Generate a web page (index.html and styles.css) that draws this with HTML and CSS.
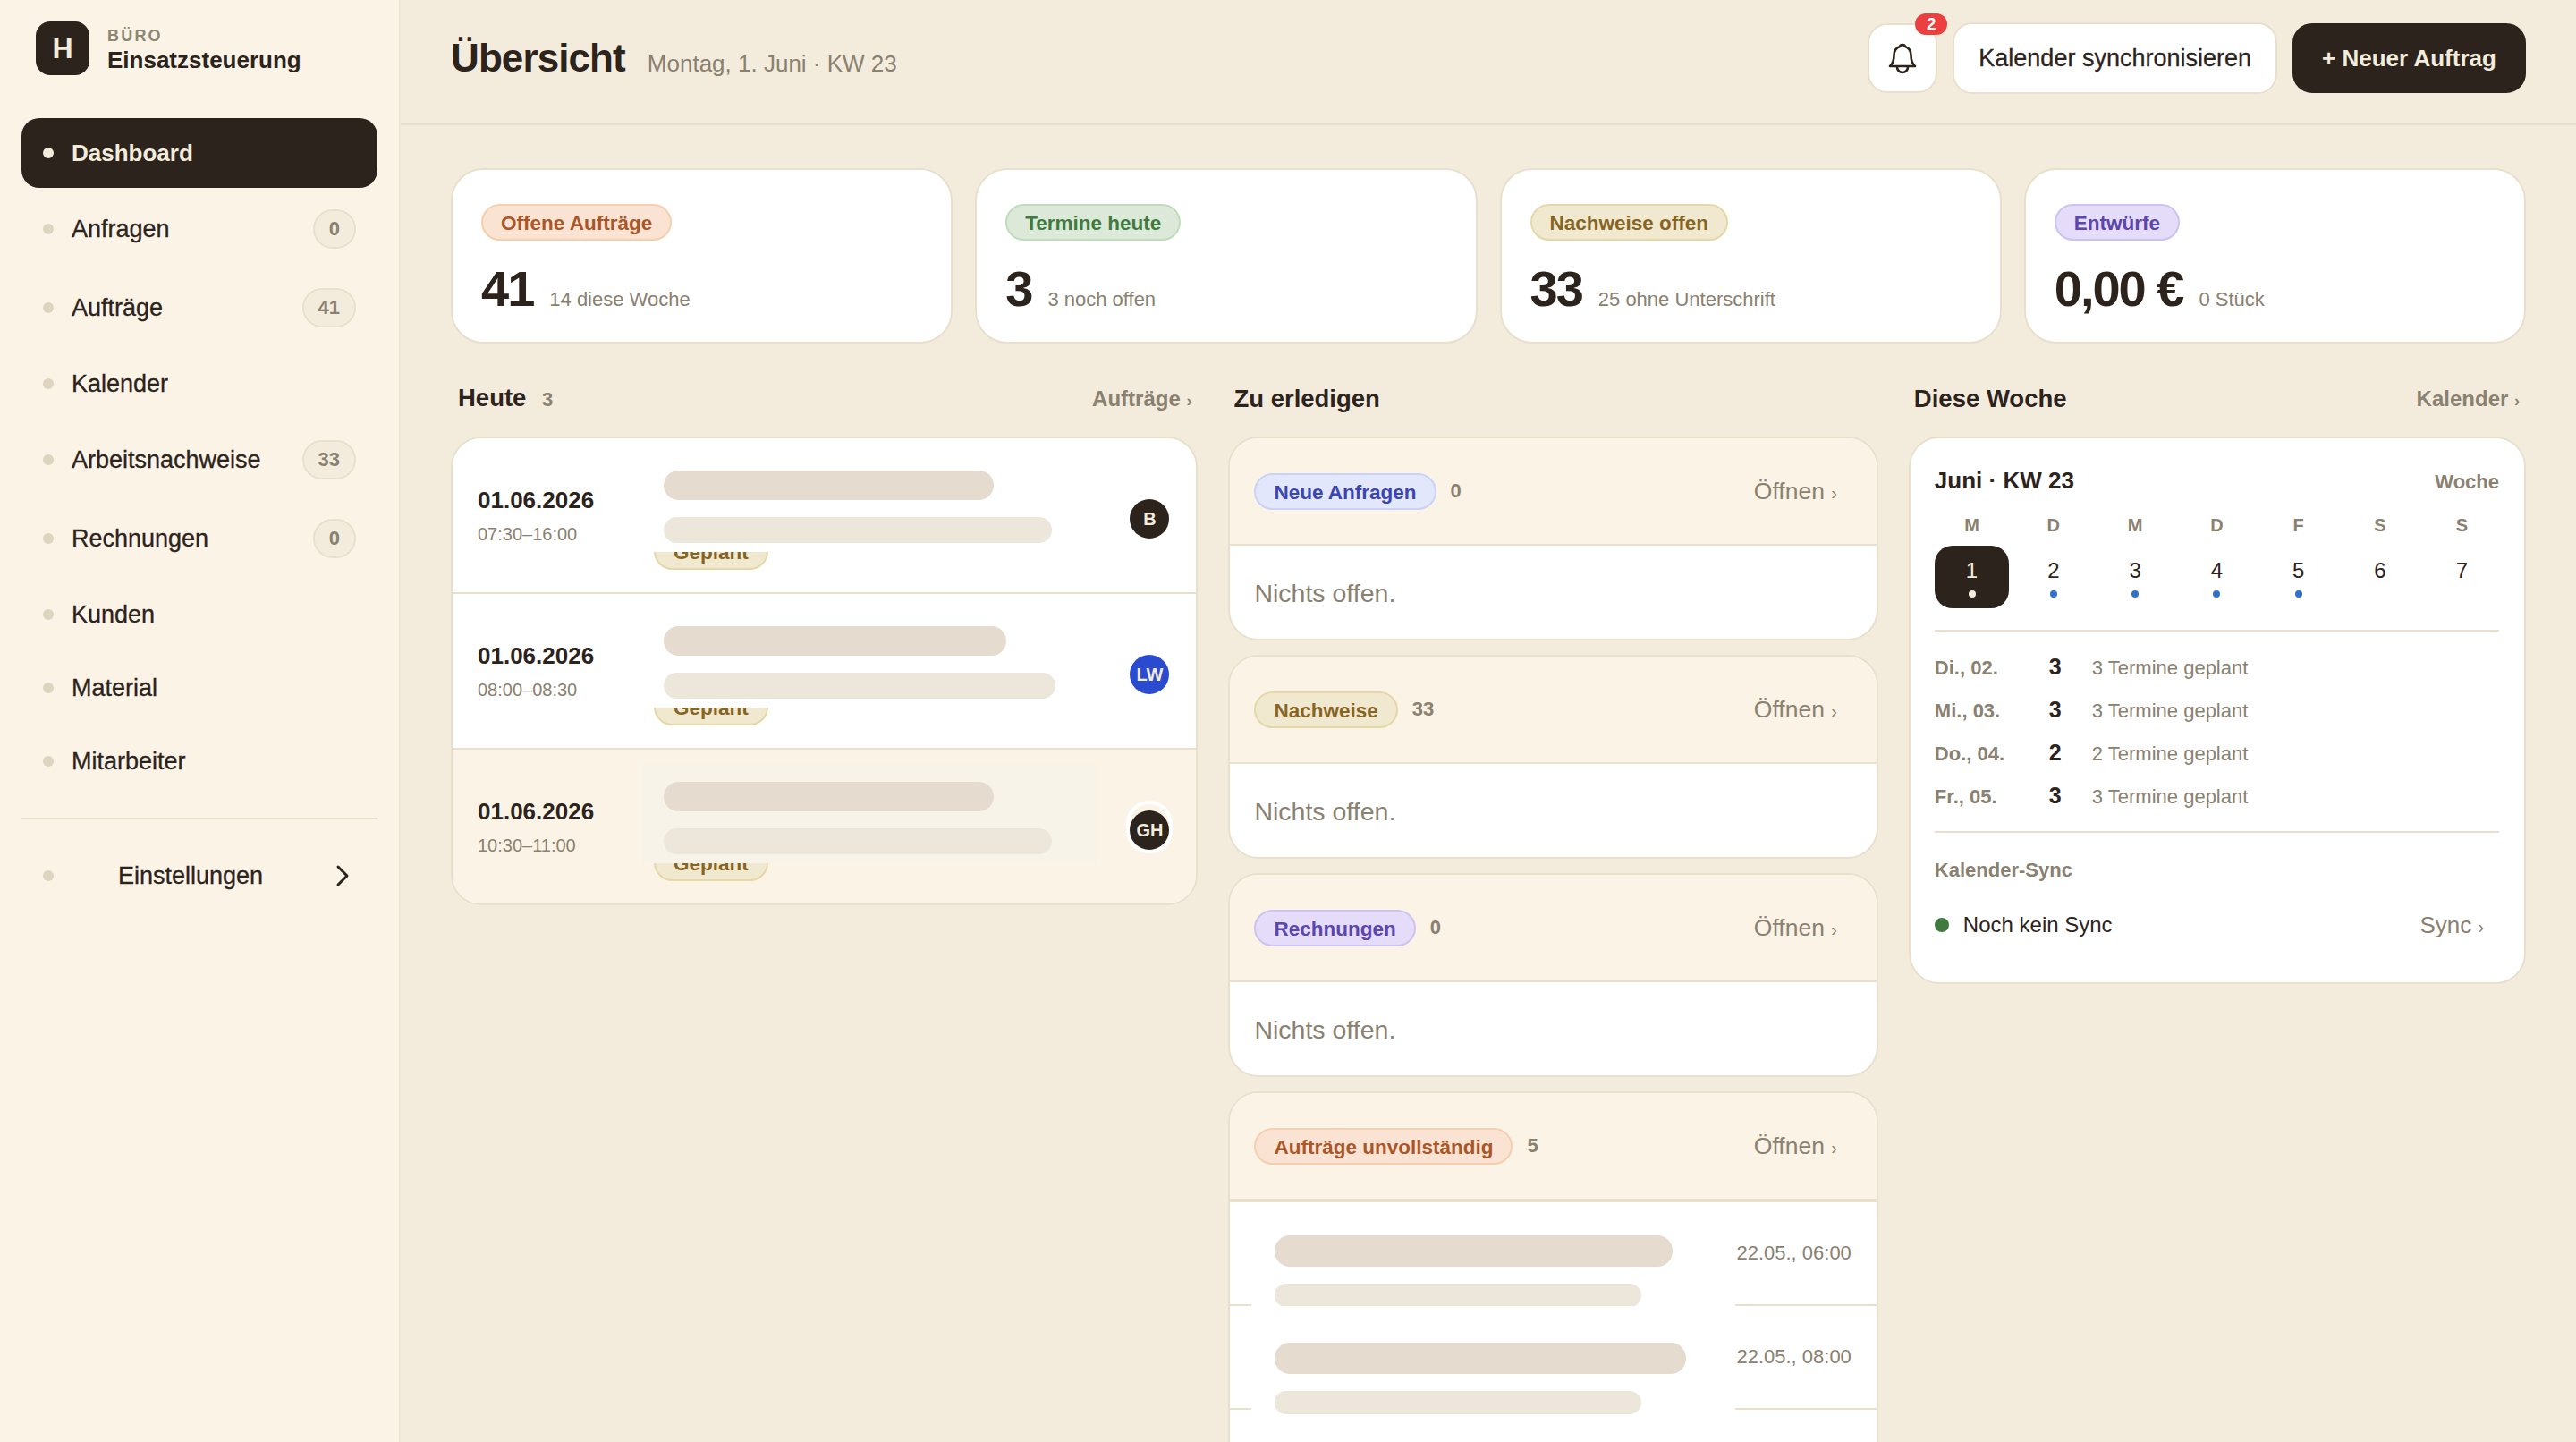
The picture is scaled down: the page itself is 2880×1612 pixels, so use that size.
FILE: index.html
```html
<!DOCTYPE html>
<html lang="de">
<head>
    <meta charset="UTF-8">
    <title>Einsatzsteuerung</title>
    <link rel="stylesheet" href="styles.css">
</head>
<body>
    <div class="app">
        <aside class="sidebar">
            <div class="brand">
                <div class="brand-logo">H</div>
                <div class="brand-text">
                    <div class="brand-kicker">BÜRO</div>
                    <div class="brand-name">Einsatzsteuerung</div>
                </div>
            </div>
            <nav class="nav">
                <a class="nav-item active"><span class="nav-dot"></span>Dashboard</a>
                <a class="nav-item"><span class="nav-dot"></span>Anfragen<span class="nav-badge">0</span></a>
                <a class="nav-item"><span class="nav-dot"></span>Aufträge<span class="nav-badge">41</span></a>
                <a class="nav-item"><span class="nav-dot"></span>Kalender</a>
                <a class="nav-item"><span class="nav-dot"></span>Arbeitsnachweise<span class="nav-badge">33</span></a>
                <a class="nav-item"><span class="nav-dot"></span>Rechnungen<span class="nav-badge">0</span></a>
                <a class="nav-item"><span class="nav-dot"></span>Kunden</a>
                <a class="nav-item"><span class="nav-dot"></span>Material</a>
                <a class="nav-item"><span class="nav-dot"></span>Mitarbeiter</a>
            </nav>
            <div class="nav-footer">
                <a class="nav-item"><span class="nav-dot"></span><span class="nav-center">Einstellungen</span>
                    <svg class="nav-chevron" viewBox="0 0 24 24" fill="none" stroke="currentColor" stroke-width="1.8" stroke-linecap="round" stroke-linejoin="round"><path d="m9 18 6-6-6-6"/></svg>
                </a>
            </div>
        </aside>

        <main class="main">
            <header class="topbar">
                <div class="page-title">
                    <h1>Übersicht</h1>
                    <span class="page-date">Montag, 1. Juni · KW 23</span>
                </div>
                <div class="top-actions">
                    <button class="btn btn-icon">
                        <svg viewBox="0 0 40 40" fill="none" stroke="currentColor" stroke-width="2.6" stroke-linecap="round" stroke-linejoin="round"><path d="M6 29c2-2 4.5-4 4.5-12 0-7 3.5-9 6.5-10 .5-2.5 5.500-2.500 6 0 3 1 6.500 3 6.500 10 0 8 2.500 10 4.500 12z"/><path d="M14 30a6 6 0 0 0 12 0"/></svg>
                        <span class="btn-count">2</span>
                    </button>
                    <button class="btn">Kalender synchronisieren</button>
                    <button class="btn btn-dark">+ Neuer Auftrag</button>
                </div>
            </header>

            <div class="content">
                <section class="kpis">
                    <div class="kpi">
                        <span class="pill pill-orange">Offene Aufträge</span>
                        <div class="kpi-line"><span class="kpi-value">41</span><span class="kpi-sub">14 diese Woche</span></div>
                    </div>
                    <div class="kpi">
                        <span class="pill pill-green">Termine heute</span>
                        <div class="kpi-line"><span class="kpi-value">3</span><span class="kpi-sub">3 noch offen</span></div>
                    </div>
                    <div class="kpi">
                        <span class="pill pill-yellow">Nachweise offen</span>
                        <div class="kpi-line"><span class="kpi-value">33</span><span class="kpi-sub">25 ohne Unterschrift</span></div>
                    </div>
                    <div class="kpi">
                        <span class="pill pill-purple">Entwürfe</span>
                        <div class="kpi-line"><span class="kpi-value">0,00 €</span><span class="kpi-sub">0 Stück</span></div>
                    </div>
                </section>

                <section class="columns">
                    <div class="col">
                        <div class="col-head">
                            <h2>Heute <span class="col-count">3</span></h2>
                            <a class="col-link">Aufträge <span class="chev">›</span></a>
                        </div>
                        <div class="card">
                            <div class="today-row">
                                <div class="today-date"><strong>01.06.2026</strong><span>07:30–16:00</span></div>
                                <div class="today-body">
                                    <span class="pill pill-yellow">Geplant</span>
                                    <div class="mask">
                                        <div class="bar bar-main" style="width: 369px"></div>
                                        <div class="bar bar-sub" style="width: 434px"></div>
                                    </div>
                                </div>
                                <div class="avatar">B</div>
                            </div>
                            <div class="today-row">
                                <div class="today-date"><strong>01.06.2026</strong><span>08:00–08:30</span></div>
                                <div class="today-body">
                                    <span class="pill pill-yellow">Geplant</span>
                                    <div class="mask">
                                        <div class="bar bar-main" style="width: 383px"></div>
                                        <div class="bar bar-sub" style="width: 438px"></div>
                                    </div>
                                </div>
                                <div class="avatar avatar-blue">LW</div>
                            </div>
                            <div class="today-row hovered">
                                <div class="today-date"><strong>01.06.2026</strong><span>10:30–11:00</span></div>
                                <div class="today-body">
                                    <span class="pill pill-yellow">Geplant</span>
                                    <div class="mask">
                                        <div class="bar bar-main" style="width: 369px"></div>
                                        <div class="bar bar-sub" style="width: 434px"></div>
                                    </div>
                                </div>
                                <div class="avatar-ring"><div class="avatar">GH</div></div>
                            </div>
                        </div>
                    </div>

                    <div class="col">
                        <div class="col-head col-head-tight">
                            <h2>Zu erledigen</h2>
                        </div>
                        <div class="todo-stack">
                            <div class="card">
                                <div class="todo-head">
                                    <span class="pill pill-blue">Neue Anfragen</span><span class="todo-count">0</span>
                                    <a class="todo-open">Öffnen <span class="chev">›</span></a>
                                </div>
                                <div class="todo-empty">Nichts offen.</div>
                            </div>
                            <div class="card">
                                <div class="todo-head">
                                    <span class="pill pill-yellow">Nachweise</span><span class="todo-count">33</span>
                                    <a class="todo-open">Öffnen <span class="chev">›</span></a>
                                </div>
                                <div class="todo-empty">Nichts offen.</div>
                            </div>
                            <div class="card">
                                <div class="todo-head">
                                    <span class="pill pill-purple">Rechnungen</span><span class="todo-count">0</span>
                                    <a class="todo-open">Öffnen <span class="chev">›</span></a>
                                </div>
                                <div class="todo-empty">Nichts offen.</div>
                            </div>
                            <div class="card">
                                <div class="todo-head">
                                    <span class="pill pill-orange">Aufträge unvollständig</span><span class="todo-count">5</span>
                                    <a class="todo-open">Öffnen <span class="chev">›</span></a>
                                </div>
                                <div class="todo-list">
                                    <div class="todo-row">
                                        <div class="mask">
                                            <div class="bar bar-main" style="width: 445px"></div>
                                            <div class="bar bar-sub" style="width: 410px"></div>
                                        </div>
                                        <span class="todo-time">22.05., 06:00</span>
                                    </div>
                                    <div class="todo-row">
                                        <div class="mask">
                                            <div class="bar bar-main" style="width: 460px"></div>
                                            <div class="bar bar-sub" style="width: 410px"></div>
                                        </div>
                                        <span class="todo-time">22.05., 08:00</span>
                                    </div>
                                </div>
                            </div>
                        </div>
                    </div>

                    <div class="col">
                        <div class="col-head col-head-tight">
                            <h2>Diese Woche</h2>
                            <a class="col-link">Kalender <span class="chev">›</span></a>
                        </div>
                        <div class="card week">
                            <div class="week-head">
                                <strong>Juni · KW 23</strong>
                                <span>Woche</span>
                            </div>
                            <div class="week-days">
                                <span>M</span><span>D</span><span>M</span><span>D</span><span>F</span><span>S</span><span>S</span>
                            </div>
                            <div class="week-dates">
                                <div class="day today">1<i></i></div>
                                <div class="day">2<i></i></div>
                                <div class="day">3<i></i></div>
                                <div class="day">4<i></i></div>
                                <div class="day">5<i></i></div>
                                <div class="day">6</div>
                                <div class="day">7</div>
                            </div>
                            <div class="week-list">
                                <div class="week-row"><span class="week-label">Di., 02.</span><strong>3</strong><span class="week-text">3 Termine geplant</span></div>
                                <div class="week-row"><span class="week-label">Mi., 03.</span><strong>3</strong><span class="week-text">3 Termine geplant</span></div>
                                <div class="week-row"><span class="week-label">Do., 04.</span><strong>2</strong><span class="week-text">2 Termine geplant</span></div>
                                <div class="week-row"><span class="week-label">Fr., 05.</span><strong>3</strong><span class="week-text">3 Termine geplant</span></div>
                            </div>
                            <div class="sync">
                                <div class="sync-title">Kalender-Sync</div>
                                <div class="sync-row">
                                    <span class="sync-dot"></span>
                                    <span class="sync-state">Noch kein Sync</span>
                                    <a class="sync-link">Sync <span class="chev">›</span></a>
                                </div>
                            </div>
                        </div>
                    </div>
                </section>
            </div>
        </main>
    </div>
</body>
</html>
```

FILE: styles.css
```css
* {
    box-sizing: border-box;
}

html, body {
    margin: 0;
    height: 100%;
}

body {
    font-family: "Liberation Sans", Arial, sans-serif;
    color: #2c231c;
    background: #f3ecdd;
    overflow: hidden;
}

.app {
    display: flex;
    height: 1612px;
    overflow: hidden;
}

/* Sidebar */
.sidebar {
    width: 448px;
    flex: none;
    background: #faf3e6;
    border-right: 2px solid #efe7d6;
}

.brand {
    display: flex;
    align-items: center;
    gap: 20px;
    padding: 24px 40px 48px;
}

.brand-logo {
    width: 60px;
    height: 60px;
    border-radius: 16px;
    background: #2c231c;
    color: #f3ecdd;
    font-size: 32px;
    font-weight: bold;
    display: flex;
    align-items: center;
    justify-content: center;
}

.brand-text {
    padding-top: 3px;
}

.brand-kicker {
    font-size: 18px;
    line-height: 22px;
    font-weight: bold;
    letter-spacing: 2.2px;
    color: #8f8672;
}

.brand-name {
    font-size: 26px;
    line-height: 32px;
    font-weight: bold;
}

.nav {
    display: flex;
    flex-direction: column;
    gap: 4px;
    padding: 0 24px;
}

.nav-item {
    display: flex;
    align-items: center;
    gap: 20px;
    padding: 20px 24px;
    border-radius: 20px;
    font-size: 27px;
    line-height: 38px;
    -webkit-text-stroke: 0.3px currentColor;
}

.nav-item.active {
    background: #2c231c;
    color: #f3ecdd;
    font-size: 26px;
    font-weight: bold;
    -webkit-text-stroke: 0;
}

.nav-dot {
    width: 12px;
    height: 12px;
    flex: none;
    border-radius: 50%;
    background: #ddd5bf;
}

.active .nav-dot {
    background: #f3ecdd;
}

.nav-badge {
    margin-left: auto;
    min-width: 47px;
    height: 44px;
    padding: 0 16px;
    border: 2px solid #e8e0cd;
    border-radius: 22px;
    background: #f3ecdd;
    color: #8a8170;
    font-size: 22px;
    line-height: 40px;
    font-weight: bold;
    text-align: center;
    -webkit-text-stroke: 0;
}

.nav-footer {
    margin: 24px 24px 0;
    padding-top: 24px;
    border-top: 2px solid #e8e0cd;
}

.nav-center {
    flex: 1;
    padding-left: 3px;
    text-align: center;
}

.nav-chevron {
    width: 40px;
    height: 40px;
    flex: none;
    margin: -1px -5px -1px 0;
}

/* Top bar */
.main {
    flex: 1;
    min-width: 0;
}

.topbar {
    height: 140px;
    padding: 0 56px 8px;
    border-bottom: 2px solid #e8e0cd;
    display: flex;
    align-items: center;
    justify-content: space-between;
}

.page-title {
    display: flex;
    align-items: baseline;
    gap: 25px;
}

.page-title h1 {
    margin: 0;
    font-size: 44px;
    line-height: 50px;
    letter-spacing: -0.9px;
}

.page-date {
    font-size: 26px;
    color: #8a8170;
}

.top-actions {
    display: flex;
    align-items: center;
    gap: 17px;
}

.btn {
    position: relative;
    height: 80px;
    padding: 0 27px;
    border: 2px solid #e8e0cd;
    border-radius: 22px;
    background: #fff;
    color: #2c231c;
    font-family: inherit;
    font-size: 27px;
    -webkit-text-stroke: 0.3px currentColor;
}

.btn-icon {
    width: 78px;
    height: 78px;
    padding: 0;
    display: flex;
    align-items: center;
    justify-content: center;
    -webkit-text-stroke: 0;
}

.btn-icon svg {
    width: 40px;
    height: 40px;
}

.btn-count {
    position: absolute;
    top: -13px;
    right: -13px;
    width: 36px;
    height: 24px;
    border-radius: 12px;
    background: #ea4040;
    color: #fff;
    font-size: 19px;
    line-height: 24px;
    font-weight: bold;
}

.btn-dark {
    height: 78px;
    width: 261px;
    padding: 0;
    background: #2c231c;
    border-color: #2c231c;
    color: #f3ecdd;
    font-size: 26px;
    font-weight: bold;
    -webkit-text-stroke: 0;
}

/* Content */
.content {
    padding: 48px 56px 0;
}

.kpis {
    display: grid;
    grid-template-columns: repeat(4, 1fr);
    gap: 25px;
}

.kpi {
    padding: 38px 32px 31px;
    border: 2px solid #e8e0cd;
    border-radius: 36px;
    background: #fff;
}

.kpi-line {
    display: flex;
    align-items: baseline;
    gap: 18px;
    margin-top: 26px;
}

.kpi-value {
    font-size: 56px;
    line-height: 56px;
    font-weight: bold;
    letter-spacing: -2px;
}

.kpi-sub {
    font-size: 22px;
    color: #8a8170;
}

.pill {
    display: inline-block;
    height: 41px;
    padding: 0 20px;
    border: 2px solid;
    border-radius: 21px;
    font-size: 22.5px;
    line-height: 39px;
    font-weight: bold;
    white-space: nowrap;
}

.pill-orange { background: #fbe3d3; border-color: #f5cfae; color: #a9572a; }
.pill-green { background: #dce9d8; border-color: #c2dabd; color: #3f7a3f; }
.pill-yellow { background: #f1e9cf; border-color: #e4d8a8; color: #866524; }
.pill-purple { background: #e4dcf9; border-color: #cec2f0; color: #5b45ae; }
.pill-blue { background: #e2e7fc; border-color: #c9d2f8; color: #3a45b0; }

.columns {
    display: grid;
    grid-template-columns: 1.15fr 1fr 0.95fr;
    gap: 34px;
    margin-top: 46px;
    align-items: start;
}

.col-head {
    height: 32px;
    margin-bottom: 26px;
    padding: 0 7px 0 8px;
    display: flex;
    align-items: center;
    justify-content: space-between;
}

.col-head-tight {
    padding: 0 7px 0 6px;
}

.col-head h2 {
    margin: 0;
    font-size: 27.5px;
    line-height: 32px;
}

.col-count {
    margin-left: 10px;
    font-size: 22px;
    color: #8a8170;
}

.col-link {
    font-size: 24px;
    font-weight: bold;
    color: #8a8170;
}

.chev {
    font-size: 0.75em;
}

.card {
    border: 2px solid #e8e0cd;
    border-radius: 34px;
    background: #fff;
    overflow: hidden;
}

.bar {
    border-radius: 17px;
}

.bar-main {
    height: 33px;
    background: #e5dccf;
}

.bar-sub {
    height: 29px;
    background: #ede6da;
}

/* Heute */
.today-row {
    display: flex;
    height: 174px;
    padding: 0 30px 0 28px;
    border-bottom: 2px solid #e8e0cd;
    align-items: center;
}

.today-row:last-child {
    border-bottom: 0;
    height: 172px;
}

.today-row.hovered {
    background: #faf3e6;
}

.today-date {
    width: 183px;
    flex: none;
    padding-top: 2px;
    display: flex;
    flex-direction: column;
    gap: 7px;
}

.today-date strong {
    font-size: 26px;
    line-height: 32px;
}

.today-date span {
    font-size: 20px;
    line-height: 30px;
    color: #8a8170;
}

.today-body {
    position: relative;
    flex: 1;
    align-self: stretch;
    padding: 106px 0 0 14px;
}

.mask {
    position: absolute;
    display: flex;
    flex-direction: column;
    gap: 19px;
    background: #fff;
}

.today-body .mask {
    top: 16px;
    left: 0;
    width: 509px;
    height: 111px;
    padding: 20px 25px 0;
}

.hovered .mask {
    background: #f8f3e9;
}

.avatar {
    width: 44px;
    height: 44px;
    flex: none;
    margin-top: 8px;
    border-radius: 50%;
    background: #2c231c;
    color: #f3ecdd;
    font-size: 20px;
    line-height: 44px;
    font-weight: bold;
    text-align: center;
}

.avatar-blue {
    background: #2a4bd0;
}

.avatar-ring {
    width: 52px;
    height: 59px;
    flex: none;
    margin: 0 -4px;
    border: 4px solid #fff;
    border-radius: 26px;
    display: flex;
    align-items: flex-end;
}

.avatar-ring .avatar {
    margin: 0;
}

/* Zu erledigen */
.todo-stack {
    display: flex;
    flex-direction: column;
    gap: 16px;
}

.todo-head {
    display: flex;
    align-items: center;
    gap: 16px;
    height: 120px;
    padding: 0 44px 0 27px;
    background: #faf3e6;
    border-bottom: 2px solid #e8e0cd;
}

.todo-count {
    font-size: 22px;
    font-weight: bold;
    color: #8a8170;
}

.todo-open {
    margin-left: auto;
    font-size: 26.5px;
    color: #8a8170;
}

.todo-empty {
    height: 104px;
    padding-left: 27px;
    font-size: 28.5px;
    line-height: 106px;
    color: #8a8170;
}

.todo-list {
    padding-bottom: 120px;
    border-top: 2px solid #e8e0cd;
}

.todo-row {
    position: relative;
    height: 116px;
    padding: 44px 28px 0 0;
    border-bottom: 2px solid #e8e0cd;
    text-align: right;
}

.todo-row .mask {
    top: 0;
    left: 24px;
    width: 541px;
    height: 130px;
    padding: 37px 26px 0;
}

.todo-row + .todo-row .mask {
    padding-top: 41px;
}

.todo-row .bar-main {
    height: 35px;
}

.todo-row .bar-sub {
    height: 26px;
}

.todo-time {
    font-size: 22px;
    color: #8a8170;
}

/* Diese Woche */
.week {
    padding: 29px 28px 42px 27px;
}

.week-head {
    display: flex;
    align-items: baseline;
    justify-content: space-between;
    line-height: 36px;
}

.week-head strong {
    font-size: 26px;
}

.week-head span {
    font-size: 22px;
    font-weight: bold;
    color: #8a8170;
}

.week-days,
.week-dates {
    display: grid;
    grid-template-columns: repeat(7, 1fr);
    gap: 8px;
    text-align: center;
}

.week-days {
    margin-top: 18px;
    font-size: 20px;
    line-height: 24px;
    font-weight: bold;
    color: #8a8170;
}

.week-dates {
    margin-top: 11px;
}

.day {
    height: 70px;
    padding-top: 14px;
    border-radius: 20px;
    font-size: 24px;
    line-height: 28px;
}

.day i {
    display: block;
    width: 8px;
    height: 8px;
    margin: 8px auto 0;
    border-radius: 50%;
    background: #2f72c9;
}

.day.today {
    background: #2c231c;
    color: #f3ecdd;
}

.day.today i {
    background: #f3ecdd;
}

.week-list {
    margin-top: 24px;
    padding: 15px 0 16px;
    border-top: 2px solid #e8e0cd;
    border-bottom: 2px solid #e8e0cd;
}

.week-row {
    display: flex;
    align-items: baseline;
    height: 48px;
    line-height: 48px;
}

.week-label {
    width: 128px;
    font-size: 22px;
    font-weight: bold;
    color: #8a8170;
}

.week-row strong {
    width: 48px;
    font-size: 25px;
}

.week-text {
    font-size: 22px;
    color: #8a8170;
}

.sync {
    padding-top: 27px;
}

.sync-title {
    font-size: 22px;
    line-height: 30px;
    font-weight: bold;
    color: #8a8170;
}

.sync-row {
    display: flex;
    align-items: center;
    gap: 16px;
    height: 44px;
    margin-top: 24px;
}

.sync-dot {
    width: 16px;
    height: 16px;
    border-radius: 50%;
    background: #3f7a3f;
}

.sync-state {
    font-size: 24px;
}

.sync-link {
    margin-left: auto;
    margin-right: 17px;
    font-size: 26px;
    color: #8a8170;
}
```
